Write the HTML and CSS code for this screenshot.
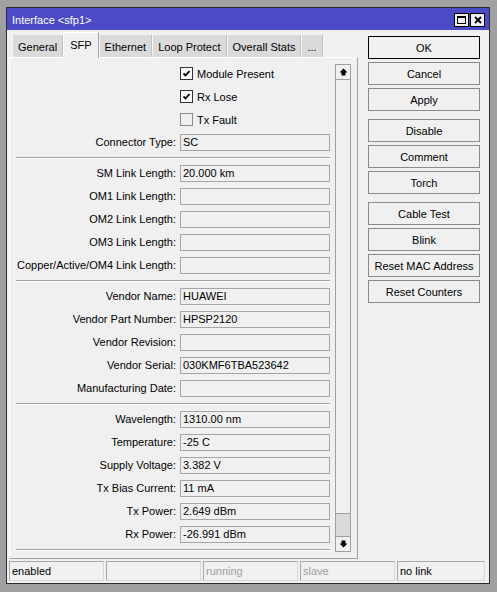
FILE: index.html
```html
<!DOCTYPE html>
<html lang="en">
<head>
  <meta charset="UTF-8" />
  <title>Interface &lt;sfp1&gt;</title>
  <link rel="stylesheet" href="styles.css">
</head>
<body>
  <div class="window">
    <div class="titlebar">
      <span class="title">Interface &lt;sfp1&gt;</span>
      <div class="title-btns">
        <span class="tbtn">
          <svg width="9" height="8" viewBox="0 0 9 8"><rect x="0.5" y="0.5" width="8" height="7" fill="none" stroke="#000"/><rect x="0" y="0" width="9" height="2" fill="#000"/></svg>
        </span>
        <span class="tbtn">
          <svg width="8" height="8" viewBox="0 0 8 8"><path d="M1 1 L7 7 M7 1 L1 7" stroke="#000" stroke-width="1.8"/></svg>
        </span>
      </div>
    </div>

    <div class="main">
      <div class="left">
        <div class="tabs">
          <div class="tab">General</div>
          <div class="tab active">SFP</div>
          <div class="tab">Ethernet</div>
          <div class="tab">Loop Protect</div>
          <div class="tab">Overall Stats</div>
          <div class="tab">...</div>
        </div>

        <div class="panel">
          <div class="fields">
            <div></div>
            <div class="check"><span class="box checked"><svg width="11" height="11" viewBox="0 0 11 11"><path d="M2.5 5.5 L4.5 7.5 L8.5 3.2" fill="none" stroke="#000" stroke-width="1.8"/></svg></span>Module Present</div>
            <div></div>
            <div class="check"><span class="box checked"><svg width="11" height="11" viewBox="0 0 11 11"><path d="M2.5 5.5 L4.5 7.5 L8.5 3.2" fill="none" stroke="#000" stroke-width="1.8"/></svg></span>Rx Lose</div>
            <div></div>
            <div class="check"><span class="box"></span>Tx Fault</div>
            <div class="label">Connector Type:</div>
            <div class="value">SC</div>
            <div class="sep"></div>

            <div class="label">SM Link Length:</div>
            <div class="value">20.000 km</div>
            <div class="label">OM1 Link Length:</div>
            <div class="value"></div>
            <div class="label">OM2 Link Length:</div>
            <div class="value"></div>
            <div class="label">OM3 Link Length:</div>
            <div class="value"></div>
            <div class="label">Copper/Active/OM4 Link Length:</div>
            <div class="value"></div>
            <div class="sep"></div>

            <div class="label">Vendor Name:</div>
            <div class="value">HUAWEI</div>
            <div class="label">Vendor Part Number:</div>
            <div class="value">HPSP2120</div>
            <div class="label">Vendor Revision:</div>
            <div class="value"></div>
            <div class="label">Vendor Serial:</div>
            <div class="value">030KMF6TBA523642</div>
            <div class="label">Manufacturing Date:</div>
            <div class="value"></div>
            <div class="sep"></div>

            <div class="label">Wavelength:</div>
            <div class="value">1310.00 nm</div>
            <div class="label">Temperature:</div>
            <div class="value">-25 C</div>
            <div class="label">Supply Voltage:</div>
            <div class="value">3.382 V</div>
            <div class="label">Tx Bias Current:</div>
            <div class="value">11 mA</div>
            <div class="label">Tx Power:</div>
            <div class="value">2.649 dBm</div>
            <div class="label">Rx Power:</div>
            <div class="value">-26.991 dBm</div>
            <div class="sep"></div>
          </div>

          <div class="scrollbar">
            <div class="sb-btn"><svg width="9" height="8" viewBox="0 0 9 8"><path d="M4.5 0.5 L8.5 4.5 H6.5 V7.5 H2.5 V4.5 H0.5 Z" fill="#000"/></svg></div>
            <div class="sb-track"></div>
            <div class="sb-thumb"></div>
            <div class="sb-btn"><svg width="9" height="8" viewBox="0 0 9 8"><path d="M4.5 7.5 L8.5 3.5 H6.5 V0.5 H2.5 V3.5 H0.5 Z" fill="#000"/></svg></div>
          </div>
        </div>
      </div>

      <div class="actions">
        <div class="group">
          <button class="btn default">OK</button>
          <button class="btn">Cancel</button>
          <button class="btn">Apply</button>
        </div>
        <div class="group">
          <button class="btn">Disable</button>
          <button class="btn">Comment</button>
          <button class="btn">Torch</button>
        </div>
        <div class="group">
          <button class="btn">Cable Test</button>
          <button class="btn">Blink</button>
          <button class="btn">Reset MAC Address</button>
          <button class="btn">Reset Counters</button>
        </div>
      </div>
    </div>

    <div class="statusbar">
      <div class="cell">enabled</div>
      <div class="cell"></div>
      <div class="cell muted">running</div>
      <div class="cell muted">slave</div>
      <div class="cell">no link</div>
    </div>
  </div>
</body>
</html>
```

FILE: styles.css
```css
* {
  box-sizing: border-box;
}
body {
  margin: 0;
  background: #a0a0a0;
  font-family: "Liberation Sans", Arial, sans-serif;
  font-size: 11px;
  color: #000;
}
.window {
  width: 484px;
  height: 577px;
  margin: 7px 0 0 6px;
  border: 1px solid #2a2a2a;
  background: #f0f0f0;
  display: flex;
  flex-direction: column;
}
.titlebar {
  flex: none;
  height: 22px;
  padding: 2px 4px 0 5px;
  background: #4b4bc8;
  color: #fff;
  display: flex;
  align-items: center;
}
.title-btns {
  margin-left: auto;
  display: flex;
  gap: 1px;
}
.tbtn {
  width: 15px;
  height: 14px;
  border: 1px solid #000;
  background: #f0f0f0;
  display: flex;
  align-items: center;
  justify-content: center;
}
.main {
  flex: 1;
  min-height: 0;
  display: flex;
  padding: 2px 0 0 2px;
}
.left {
  width: 349px;
  display: flex;
  flex-direction: column;
}
.tabs {
  flex: none;
  height: 25px;
  padding-left: 3px;
  display: flex;
  align-items: flex-end;
}
.tab {
  height: 23px;
  padding: 1px 5px 0;
  background: #dadada;
  border-top: 1px solid #f4f4f4;
  border-left: 1px solid #f4f4f4;
  border-right: 1px solid #c4c4c4;
  display: flex;
  align-items: center;
  white-space: nowrap;
}
.tab.active {
  position: relative;
  z-index: 1;
  height: 26px;
  margin-bottom: -1px;
  padding: 0 6px 2px;
  background: #f0f0f0;
  border-top-color: #fff;
  border-left-color: #fff;
  border-right-color: #a0a0a0;
}
.panel {
  flex: 1;
  display: flex;
  padding: 6px;
  border: 1px solid;
  border-color: #fff #a0a0a0 #a0a0a0 #fff;
}
.fields {
  width: 314px;
  margin-top: 1px;
  display: grid;
  grid-template-columns: 160px 150px;
  column-gap: 4px;
  row-gap: 6px;
  align-content: start;
}
.label {
  height: 17px;
  line-height: 17px;
  text-align: right;
  white-space: nowrap;
}
.value {
  height: 17px;
  padding: 0 2px;
  line-height: 15px;
  border: 1px solid #a5a5a5;
  white-space: nowrap;
}
.check {
  height: 17px;
  display: flex;
  align-items: center;
  gap: 4px;
}
.box {
  width: 13px;
  height: 13px;
  border: 1px solid #8a8a8a;
  background: #f0f0f0;
  display: flex;
}
.box.checked {
  border-color: #333;
  background: #fafafa;
}
.sep {
  grid-column: 1 / -1;
  height: 2px;
  border-top: 1px solid #a0a0a0;
  border-bottom: 1px solid #fff;
}
.scrollbar {
  width: 16px;
  margin-left: 5px;
  display: flex;
  flex-direction: column;
}
.sb-btn {
  flex: none;
  height: 16px;
  border: 1px solid #a0a0a0;
  background: #f0f0f0;
  display: flex;
  align-items: center;
  justify-content: center;
}
.sb-track {
  flex: 1;
  border-left: 1px solid #a0a0a0;
  border-right: 1px solid #a0a0a0;
}
.sb-thumb {
  flex: none;
  height: 23px;
  background: #dadada;
  border: 1px solid #a0a0a0;
  border-bottom: none;
}
.actions {
  width: 112px;
  margin-left: 10px;
  padding-top: 4px;
  display: flex;
  flex-direction: column;
  gap: 8px;
}
.group {
  display: flex;
  flex-direction: column;
  gap: 3px;
}
.btn {
  height: 23px;
  margin: 0;
  padding: 0;
  border: 1px solid #8a8a8a;
  background: #f0f0f0;
  font-family: inherit;
  font-size: 11px;
  color: #000;
}
.btn.default {
  border-color: #000;
}
.statusbar {
  flex: none;
  height: 24px;
  padding: 2px 4px 2px 2px;
  display: grid;
  grid-template-columns: repeat(4, 95px) 1fr;
  column-gap: 2px;
}
.cell {
  height: 20px;
  padding-left: 2px;
  line-height: 18px;
  border: 1px solid;
  border-color: #a8a8a8 #d8d8d8 #d8d8d8 #a8a8a8;
  white-space: nowrap;
}
.cell.muted {
  color: #a0a0a0;
}
```
